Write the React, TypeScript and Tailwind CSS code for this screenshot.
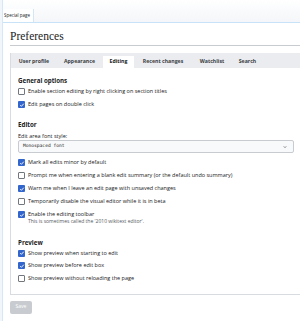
import { ReactNode } from "react";

const Check = ({ on }: { on?: boolean }) =>
  on ? (
    <span className="flex h-[7px] w-[7px] shrink-0 items-center justify-center rounded-[1px] bg-[#3366cc]">
      <svg viewBox="0 0 10 10" className="h-[6px] w-[6px]">
        <path d="M2 5.2l2 2 4-4.4" fill="none" stroke="white" strokeWidth="1.5" />
      </svg>
    </span>
  ) : (
    <span className="h-[7px] w-[7px] shrink-0 rounded-[1px] border border-[#72777d] bg-white" />
  );

const Row = ({ on, children, h = "h-[13px]" }: { on?: boolean; children: ReactNode; h?: string }) => (
  <div className={`flex items-center gap-[3px] ${h}`}>
    <Check on={on} />
    <span className="whitespace-nowrap leading-[7px]">{children}</span>
  </div>
);

const Title = ({ children, className = "" }: { children: ReactNode; className?: string }) => (
  <div className={`text-[6.2px] font-bold leading-[9px] ${className}`}>{children}</div>
);

export default function App() {
  const tabs = [
    { label: "User profile", w: "w-[44px]" },
    { label: "Appearance", w: "w-[47px]" },
    { label: "Editing", w: "w-[31px]" },
    { label: "Recent changes", w: "w-[58px]" },
    { label: "Watchlist", w: "w-[40px]" },
    { label: "Search", w: "w-[31px]" },
  ];

  return (
    <div className="flex h-[321px] w-[300px] overflow-hidden bg-white font-['Open_Sans',sans-serif] text-[#202122]">
      <div className="w-[3px] shrink-0 border-r border-[#d6e8f7] bg-[#f1f6fb]" />
      <div className="min-w-0 flex-1">
        <div className="flex h-[23px] items-end border-b border-[#c8e2f7] bg-gradient-to-b from-white to-[#f4f6f9]">
          <div className="flex h-[13px] items-center border-r border-[#d2e6f7] bg-white pl-[1px] pr-[3px] text-[4.5px] text-[#202122]">
            Special page
          </div>
        </div>

        <div className="pl-[7px]">
          <h1 className="mt-[5px] border-b border-[#c8ccd1] font-['Liberation_Serif',serif] text-[11.5px] leading-[17px]">
            Preferences
          </h1>

          <div className="mt-[7px] border-b border-l border-[#d8dbe0] text-[5.5px]">
            <div className="flex h-[15px] items-end bg-[#eaecf0] pl-[1px]">
              {tabs.map((t) => (
                <div
                  key={t.label}
                  className={`flex h-[12px] shrink-0 items-center justify-center whitespace-nowrap text-[5.2px] font-bold ${t.w} ${
                    t.label === "Editing" ? "bg-white text-[#202122]" : "text-[#3c4043]"
                  }`}
                >
                  {t.label}
                </div>
              ))}
            </div>

            <div className="pb-[9px] pl-[7px] pr-[6px]">
              <Title className="mt-[8px]">General options</Title>
              <Row>Enable section editing by right clicking on section titles</Row>
              <Row on>Edit pages on double click</Row>

              <Title className="mt-[9px]">Editor</Title>
              <div className="mt-[3px] leading-[8px]">Edit area font style:</div>
              <div className="flex h-[13px] items-center justify-between rounded-[2px] border border-[#c8ccd1] bg-[#f8f9fa] pl-[4px] pr-[6px] font-['DejaVu_Sans_Mono',monospace] text-[4.6px]">
                <span>Monospaced font</span>
                <svg viewBox="0 0 10 10" className="h-[4px] w-[4px]">
                  <path d="M2 3.5l3 3 3-3" fill="none" stroke="#202122" strokeWidth="1.4" />
                </svg>
              </div>

              <div className="mt-[3px]">
                <Row on>Mark all edits minor by default</Row>
                <Row>Prompt me when entering a blank edit summary (or the default undo summary)</Row>
                <Row on>Warn me when I leave an edit page with unsaved changes</Row>
                <Row>Temporarily disable the visual editor while it is in beta</Row>
                <div className="flex gap-[3px] pt-[3px]">
                  <Check on />
                  <div>
                    <div className="leading-[7px]">Enable the editing toolbar</div>
                    <div className="mt-[1px] text-[5px] leading-[5px] text-[#54595d]">
                      This is sometimes called the '2010 wikitext editor'.
                    </div>
                  </div>
                </div>
              </div>

              <Title className="mt-[14px]">Preview</Title>
              <Row on h="h-[12.5px]">Show preview when starting to edit</Row>
              <Row on h="h-[12.5px]">Show preview before edit box</Row>
              <Row h="h-[12.5px]">Show preview without reloading the page</Row>
            </div>
          </div>

          <button className="mt-[6px] flex h-[13px] w-[22px] items-center justify-center rounded-[2px] bg-[#c8ccd1] text-[5px] text-white">
            Save
          </button>
        </div>
      </div>
    </div>
  );
}
